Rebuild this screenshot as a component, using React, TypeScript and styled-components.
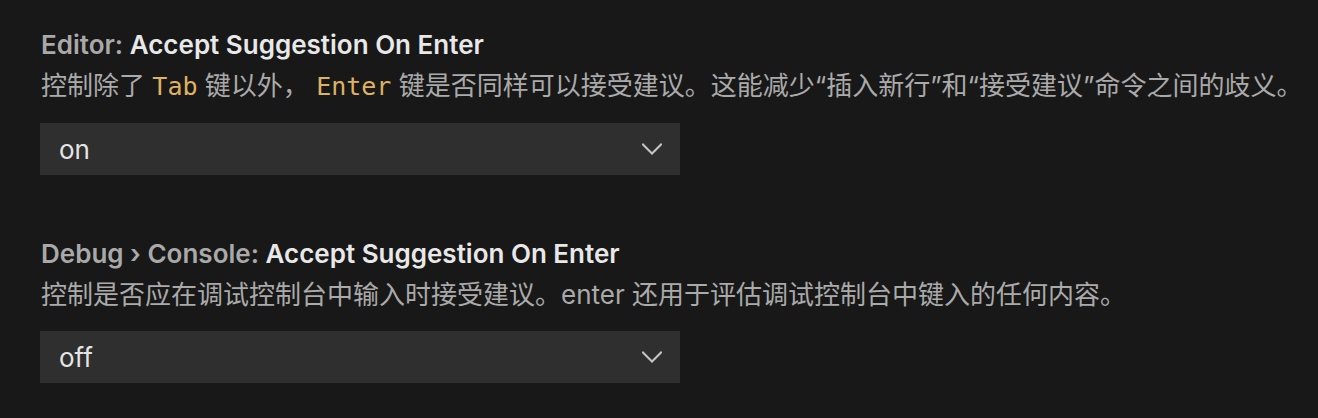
import React from "react";
import styled, { createGlobalStyle } from "styled-components";

const GlobalStyle = createGlobalStyle`
  html, body {
    margin: 0;
    padding: 0;
    background: #181818;
  }
  body {
    font-family: "Inter", "Noto Sans CJK SC", sans-serif;
    -webkit-font-smoothing: antialiased;
  }
`;

const Page = styled.div`
  width: 1318px;
  height: 418px;
  background: #181818;
  padding-left: 41px;
  box-sizing: border-box;
  display: flex;
  flex-direction: column;
`;

const Item = styled.section`
  display: flex;
  flex-direction: column;
  padding: 26px 0 34px;
`;

const Title = styled.div`
  font-family: "Inter", "Noto Sans CJK SC", sans-serif;
  font-size: 26px;
  line-height: 38px;
  font-weight: 600;
  color: #e8e8e8;
  white-space: nowrap;
`;

const Category = styled.span`
  color: #a9a9a9;
`;

const Description = styled.div`
  font-family: "Inter", "Noto Sans CJK SC", sans-serif;
  font-size: 26px;
  line-height: 44px;
  color: #aaaaaa;
  white-space: nowrap;
`;

const Code = styled.code`
  font-family: "DejaVu Sans Mono", monospace;
  font-size: 25px;
  color: #dfb262;
`;

const Select = styled.div`
  margin-top: 14px;
  margin-left: -1px;
  width: 640px;
  height: 52px;
  box-sizing: border-box;
  background: #2f2f2f;
  display: flex;
  align-items: center;
  justify-content: space-between;
  padding: 0 18px 0 19px;
  font-family: "Inter", sans-serif;
  font-size: 26px;
  color: #e4e4e4;
`;

const Chevron = () => (
  <svg width="20" height="12" viewBox="0 0 20 12" fill="none">
    <polyline
      points="1,1.5 10,10.5 19,1.5"
      stroke="#c4c4c4"
      strokeWidth="2"
      strokeLinecap="square"
      strokeLinejoin="miter"
    />
  </svg>
);

export default function App() {
  return (
    <>
      <GlobalStyle />
      <Page>
        <Item>
          <Title>
            <Category>Editor: </Category>Accept Suggestion On Enter
          </Title>
          <Description>
            控制除了 <Code>Tab</Code> 键以外， <Code>Enter</Code>{" "}
            键是否同样可以接受建议。这能减少“插入新行”和“接受建议”命令之间的歧义。
          </Description>
          <Select>
            <span>on</span>
            <Chevron />
          </Select>
        </Item>
        <Item>
          <Title>
            <Category>Debug › Console: </Category>Accept Suggestion On Enter
          </Title>
          <Description>
            控制是否应在调试控制台中输入时接受建议。enter 还用于评估调试控制台中键入的任何内容。
          </Description>
          <Select>
            <span>off</span>
            <Chevron />
          </Select>
        </Item>
      </Page>
    </>
  );
}
